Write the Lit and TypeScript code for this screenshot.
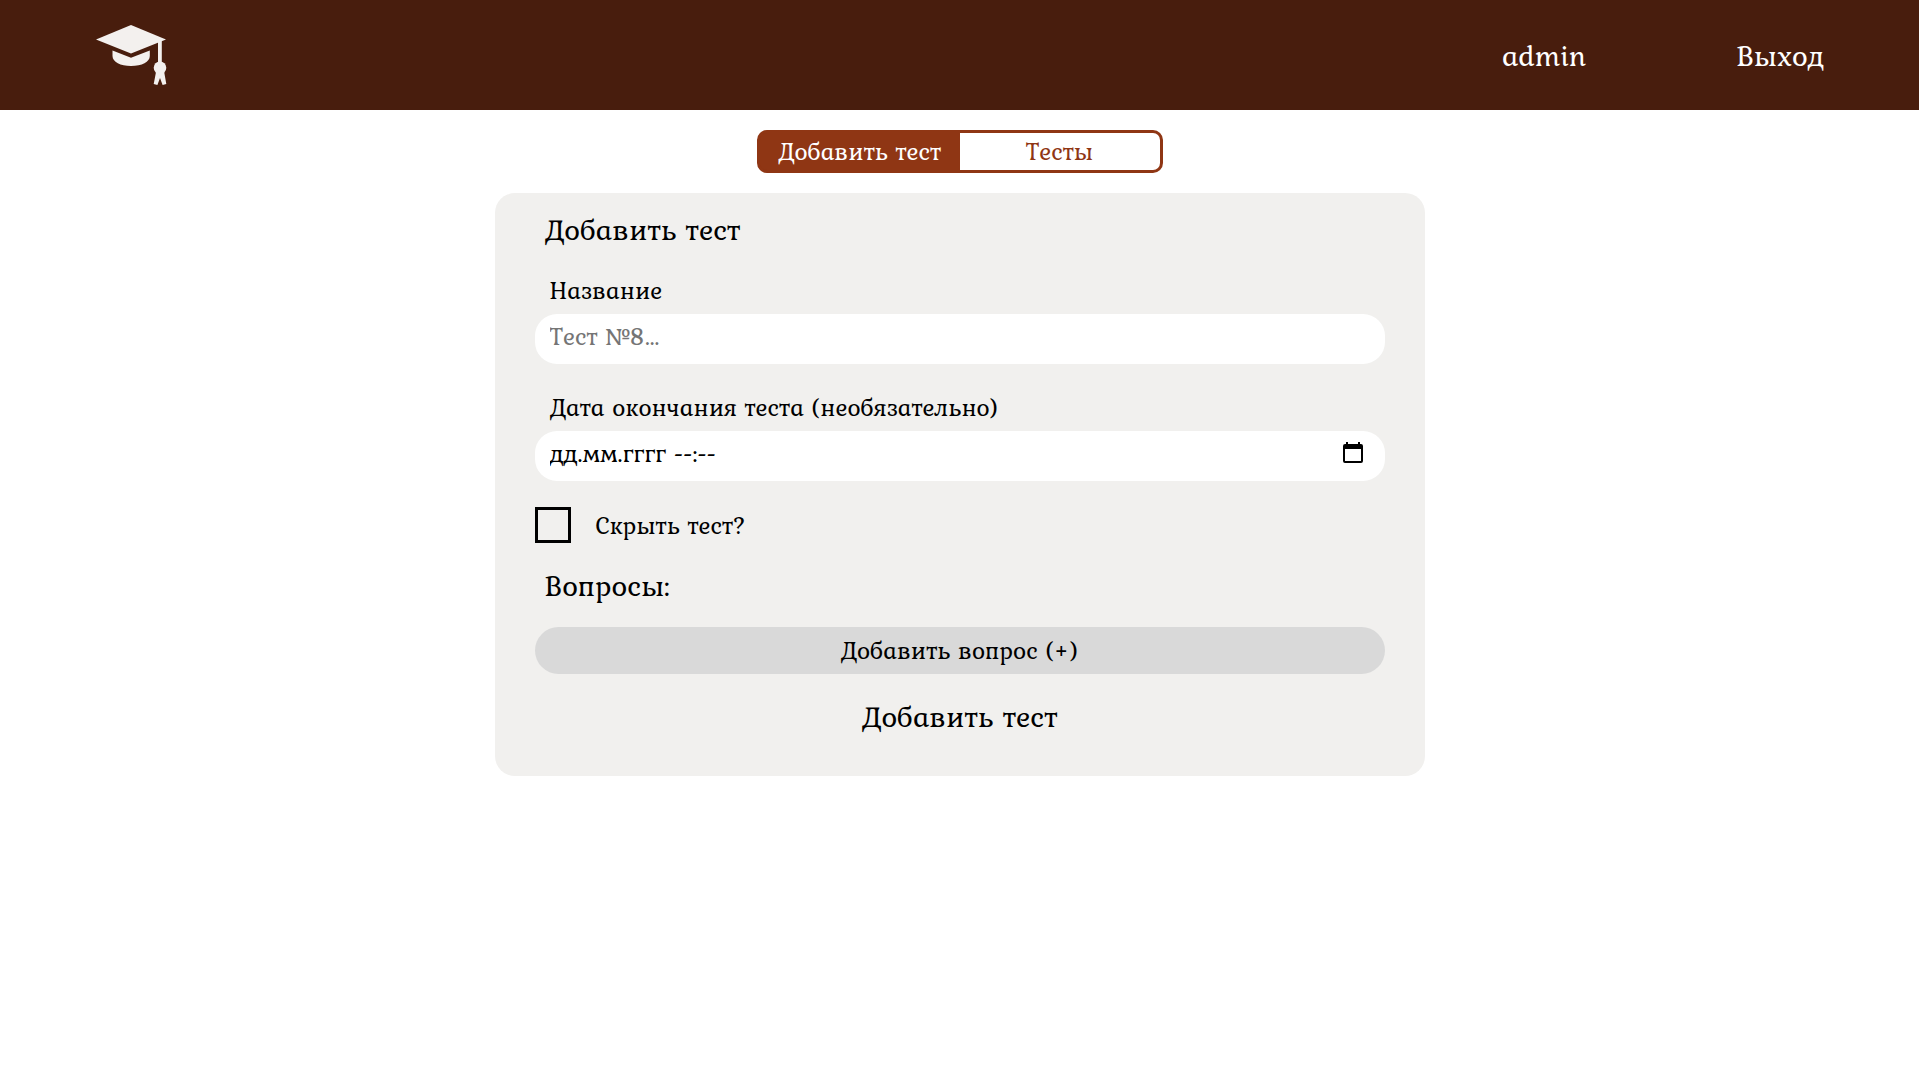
import { LitElement, html, css } from "lit";
import { customElement, state } from "lit/decorators.js";

type Tab = "add" | "list";

@customElement("app-header")
class AppHeader extends LitElement {
  static styles = css`
    :host {
      display: block;
    }
    .bar {
      display: flex;
      align-items: center;
      justify-content: space-between;
      min-height: 110px;
      padding: 0 95px;
      box-sizing: border-box;
      background: #481d0d;
    }
    .logo {
      display: block;
      line-height: 0;
    }
    .links {
      display: flex;
      align-items: center;
      gap: 150px;
    }
    .link {
      color: #ffffff;
      font-size: 30px;
      line-height: 36px;
      text-decoration: none;
    }
  `;

  render() {
    return html`
      <header class="bar">
        <a class="logo" href="#" aria-label="Главная">
          <svg width="72" height="62" viewBox="0 0 72 62" fill="#f3f0ee" aria-hidden="true">
            <path d="M36 1 L71 15.5 L36 29.5 L1 15.5 Z" />
            <path d="M17.5 26.5 L36 33.8 L54.8 26.5 V32 C54.8 38 47 42 36 42 C25.5 42 17.5 38 17.5 32 Z" />
            <path d="M63 15 H66.8 V39 H63 Z" />
            <circle cx="65" cy="43.7" r="6.3" />
            <path d="M61.2 47 L69 47 L71.3 60 L67.6 61 L65 54 L62.4 61 L58.7 60 Z" />
          </svg>
        </a>
        <nav class="links">
          <a class="link" href="#profile">admin</a>
          <a class="link" href="#logout">Выход</a>
        </nav>
      </header>
    `;
  }
}

@customElement("test-form")
class TestForm extends LitElement {
  static styles = css`
    :host {
      display: block;
    }
    .card {
      display: flex;
      flex-direction: column;
      gap: 26px;
      padding: 20px 40px 40px;
      border-radius: 20px;
      background: #f1f0ee;
    }
    .title {
      margin: 0;
      padding: 0 10px 3px;
      font-size: 30px;
      line-height: 33px;
      font-weight: 400;
    }
    .fields {
      display: flex;
      flex-direction: column;
      gap: 28px;
    }
    .field {
      display: flex;
      flex-direction: column;
      gap: 8px;
    }
    .label {
      padding: 0 15px;
      font-size: 25px;
      line-height: 31px;
    }
    .control {
      display: flex;
      align-items: center;
      height: 50px;
      padding: 0 20px 6px 15px;
      box-sizing: border-box;
      border-radius: 22px;
      background: #ffffff;
    }
    .input {
      flex: 1;
      min-width: 0;
      padding: 0;
      border: 0;
      outline: 0;
      background: none;
      color: #000000;
      font: inherit;
      font-size: 25px;
      line-height: 31px;
    }
    .input::placeholder {
      color: #757575;
      opacity: 1;
    }
    .date {
      font-size: 26px;
    }
    .date::placeholder {
      color: #000000;
    }
    .picker {
      display: flex;
      padding: 0;
      border: 0;
      background: none;
      cursor: pointer;
    }
    .hide {
      display: flex;
      align-items: center;
      gap: 25px;
    }
    .box {
      appearance: none;
      width: 36px;
      height: 36px;
      margin: 0;
      border: 3px solid #000000;
      border-radius: 0;
      cursor: pointer;
    }
    .box:checked {
      background: #000000;
      box-shadow: inset 0 0 0 4px #f1f0ee;
    }
    .caption {
      font-size: 25px;
      line-height: 31px;
    }
    .questions {
      display: flex;
      flex-direction: column;
      gap: 22px;
    }
    .add {
      height: 47px;
      padding: 0;
      border: 0;
      border-radius: 24px;
      background: #d9d9d9;
      color: #000000;
      font: inherit;
      font-size: 25px;
      line-height: 31px;
      cursor: pointer;
    }
    .submit {
      align-self: center;
      padding: 0 0 3px;
      border: 0;
      background: none;
      color: #000000;
      font: inherit;
      font-size: 30px;
      line-height: 33px;
      cursor: pointer;
    }
  `;

  render() {
    return html`
      <form class="card" @submit=${(e: Event) => e.preventDefault()}>
        <h1 class="title">Добавить тест</h1>
        <div class="fields">
          <div class="field">
            <label class="label" for="name">Название</label>
            <div class="control">
              <input class="input" id="name" type="text" placeholder="Тест №8..." />
            </div>
          </div>
          <div class="field">
            <label class="label" for="deadline">Дата окончания теста (необязательно)</label>
            <div class="control">
              <input class="input date" id="deadline" type="text" placeholder="дд.мм.гггг --:--" />
              <button class="picker" type="button" aria-label="Выбрать дату">
                <svg width="24" height="24" viewBox="0 0 24 24" aria-hidden="true">
                  <path
                    fill="#000000"
                    fill-rule="evenodd"
                    d="M5 1 H7 V3 H17 V1 H19 V3 H20 A2 2 0 0 1 22 5 V20 A2 2 0 0 1 20 22 H4 A2 2 0 0 1 2 20 V5 A2 2 0 0 1 4 3 H5 Z M4 8 V20 H20 V8 Z"
                  />
                </svg>
              </button>
            </div>
          </div>
        </div>
        <div class="hide">
          <input class="box" id="hidden" type="checkbox" />
          <label class="caption" for="hidden">Скрыть тест?</label>
        </div>
        <section class="questions">
          <h2 class="title">Вопросы:</h2>
          <button class="add" type="button">Добавить вопрос (+)</button>
        </section>
        <button class="submit" type="submit">Добавить тест</button>
      </form>
    `;
  }
}

@customElement("app-root")
class AppRoot extends LitElement {
  static styles = css`
    :host {
      display: block;
      min-height: 100vh;
      background: #ffffff;
      color: #000000;
      font-family: Kurale, "Liberation Serif", serif;
    }
    .main {
      display: flex;
      flex-direction: column;
      align-items: center;
      gap: 20px;
      padding: 20px;
    }
    .tabs {
      display: grid;
      grid-template-columns: 1fr 1fr;
      width: 100%;
      max-width: 406px;
      box-sizing: border-box;
      border: 3px solid #8f3614;
      border-radius: 10px;
      background: #8f3614;
    }
    .tab {
      height: 37px;
      padding: 0;
      border: 0;
      border-radius: 7px 0 0 7px;
      background: #ffffff;
      color: #8f3614;
      font: inherit;
      font-size: 25px;
      line-height: 31px;
      cursor: pointer;
    }
    .tab:last-child {
      border-radius: 0 7px 7px 0;
    }
    .tab[aria-selected="true"] {
      background: #8f3614;
      color: #ffffff;
    }
    .form {
      width: 100%;
      max-width: 930px;
    }
  `;

  @state() private tab: Tab = "add";

  private renderTab(id: Tab, text: string) {
    return html`<button
      class="tab"
      role="tab"
      aria-selected=${this.tab === id ? "true" : "false"}
      @click=${() => (this.tab = id)}
    >${text}</button>`;
  }

  render() {
    return html`
      <app-header></app-header>
      <main class="main">
        <div class="tabs" role="tablist">
          ${this.renderTab("add", "Добавить тест")}
          ${this.renderTab("list", "Тесты")}
        </div>
        ${this.tab === "add" ? html`<test-form class="form"></test-form>` : null}
      </main>
    `;
  }
}
